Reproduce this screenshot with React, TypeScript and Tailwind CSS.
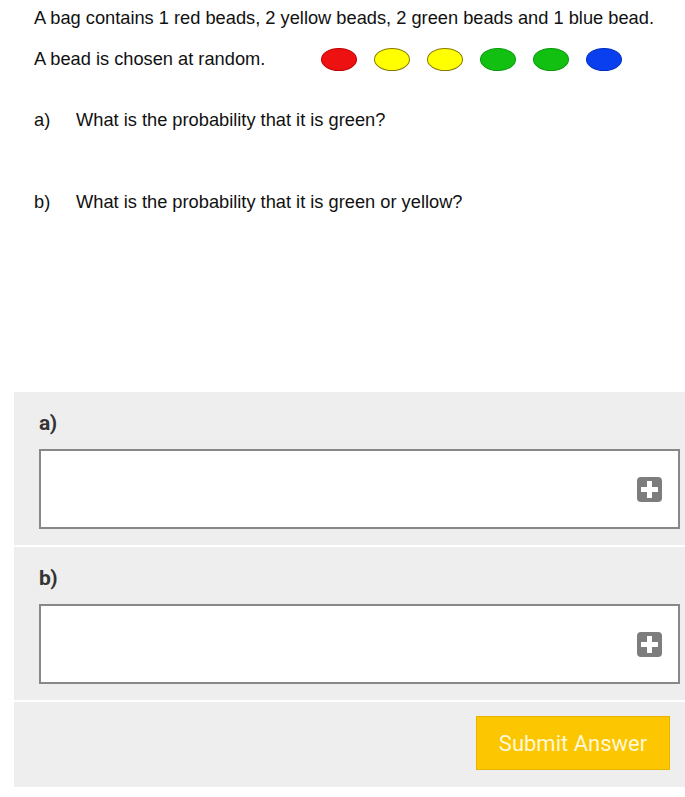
const beads = [
  { fill: "bg-[#ee1111]", border: "border-[#c00000]" },
  { fill: "bg-[#ffff00]", border: "border-[#8a7a00]" },
  { fill: "bg-[#ffff00]", border: "border-[#8a7a00]" },
  { fill: "bg-[#11c011]", border: "border-[#0a9a0a]" },
  { fill: "bg-[#11c011]", border: "border-[#0a9a0a]" },
  { fill: "bg-[#0a3ff0]", border: "border-[#0030c0]" },
];

export default function App() {
  return (
    <div className="w-[685px] h-[797px] bg-white font-['Liberation_Sans',Arial,sans-serif] text-[#111] overflow-hidden">
      {/* Question */}
      <div className="pl-[34px] pt-[7px]">
        <p className="text-[18.25px] leading-[22px]">
          A bag contains 1 red beads, 2 yellow beads, 2 green beads and 1 blue bead.
        </p>
        <div className="flex items-center mt-[18px] h-[24px]">
          <p className="text-[18.25px] leading-[22px] w-[287px]">A bead is chosen at random.</p>
          <div className="flex gap-[17px]">
            {beads.map((b, i) => (
              <div key={i} className={`w-[36px] h-[23px] rounded-[50%] border ${b.fill} ${b.border}`} />
            ))}
          </div>
        </div>
        <div className="flex text-[18.25px] leading-[22px] mt-[38px]">
          <span className="w-[42px]">a)</span>
          <span>What is the probability that it is green?</span>
        </div>
        <div className="flex text-[18.25px] leading-[22px] mt-[60px]">
          <span className="w-[42px]">b)</span>
          <span>What is the probability that it is green or yellow?</span>
        </div>
      </div>

      {/* Answer panel */}
      <div className="ml-[14px] mt-[179px] flex flex-col gap-[2px] bg-white">
        <AnswerPart label="a)" />
        <AnswerPart label="b)" />
        <div className="bg-[#eeeeee] h-[85px] flex justify-end items-start pt-[14px] pr-[15px]">
          <button className="w-[194px] h-[54px] bg-[#fcc600] border border-[#e8b400] text-[#fff8d8] text-[22px] font-['Roboto',sans-serif]">
            Submit Answer
          </button>
        </div>
      </div>
    </div>
  );
}

function AnswerPart({ label }: { label: string }) {
  return (
    <div className="bg-[#eeeeee] h-[153px] pl-[25px] pr-[5px] pt-[18px]">
      <div className="font-['Roboto',sans-serif] font-bold text-[21px] leading-[26px] text-[#333] tracking-[-0.5px]">{label}</div>
      <div className="mt-[13px] h-[80px] bg-white border-2 border-[#888888] flex items-center justify-end pr-[16px]">
        <div className="w-[25px] h-[25px] rounded-[4px] bg-[#7d7d7d] flex items-center justify-center">
          <svg width="19" height="19" viewBox="0 0 19 19">
            <rect x="7" y="1" width="5" height="17" fill="white" />
            <rect x="1" y="7" width="17" height="5" fill="white" />
          </svg>
        </div>
      </div>
    </div>
  );
}
